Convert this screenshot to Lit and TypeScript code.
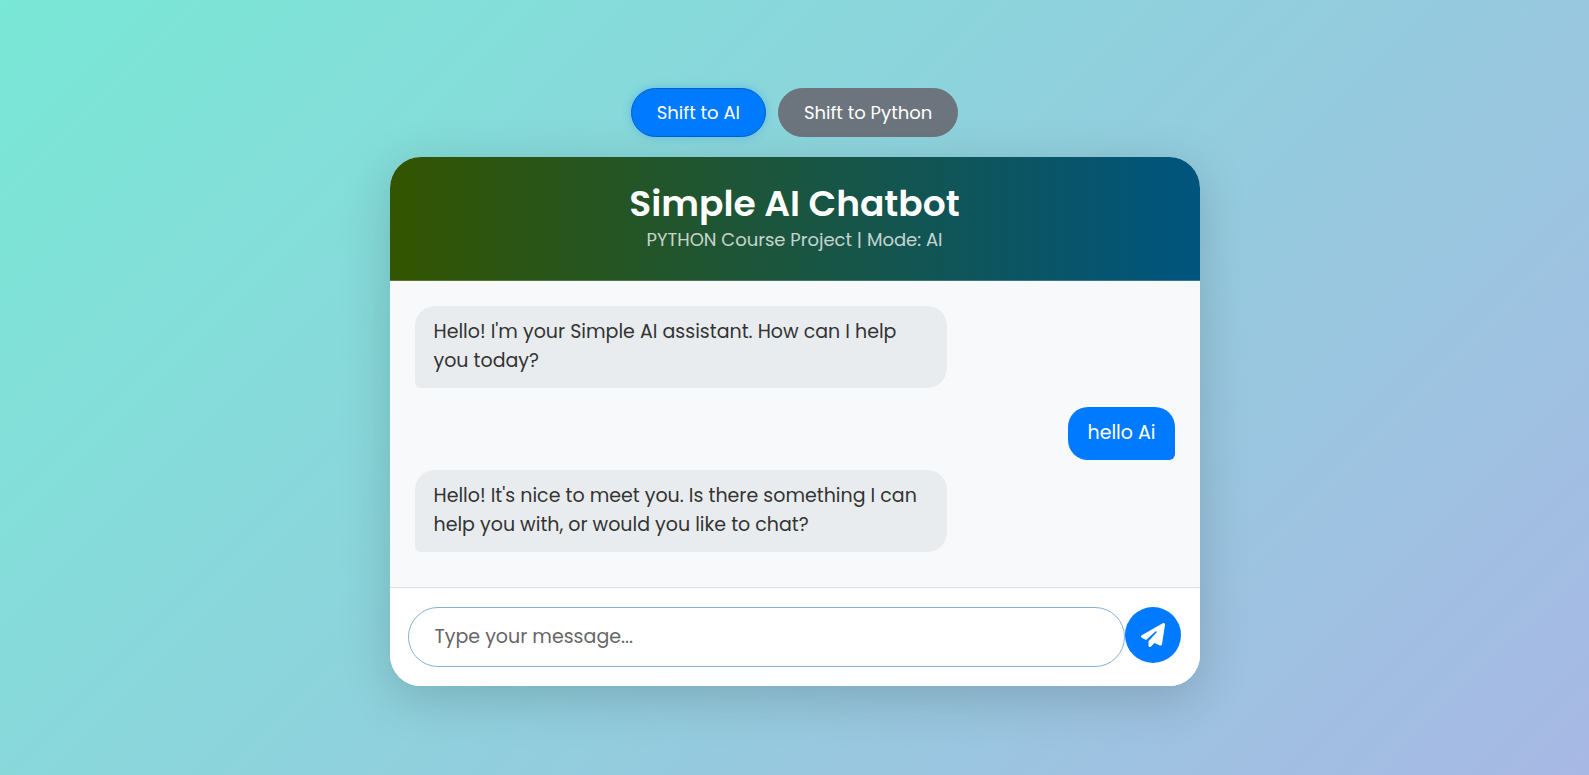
import { LitElement, html, css } from "lit";
import { customElement, state } from "lit/decorators.js";

type Mode = "AI" | "Python";

interface Message {
  from: "bot" | "user";
  text: string;
}

@customElement("app-root")
export class AppRoot extends LitElement {
  static styles = css`
    :host {
      display: flex;
      flex-direction: column;
      align-items: center;
      justify-content: center;
      gap: 20px;
      box-sizing: border-box;
      min-height: 100vh;
      padding: 18px 20px 20px;
      background: linear-gradient(135deg, #79e8d6, #a7b8e4);
      font-family: Poppins, Inter, "Liberation Sans", sans-serif;
      color: #333333;
    }
    * {
      box-sizing: border-box;
    }
    .modes {
      display: flex;
      gap: 12px;
    }
    .mode {
      padding: 12px 25px;
      border: 1px solid #6c757d;
      border-radius: 25px;
      background: #6c757d;
      color: #ffffff;
      font: inherit;
      font-size: 18px;
      line-height: 23px;
      cursor: pointer;
    }
    .mode.active {
      background: #007bff;
      border-color: #0062cc;
      box-shadow: 0 0 10px rgba(0, 123, 255, 0.3);
    }
    .card {
      width: 100%;
      max-width: 810px;
      overflow: hidden;
      border-radius: 31px;
      background: #ffffff;
      box-shadow: 0 12px 50px rgba(0, 0, 0, 0.17);
    }
    .header {
      padding: 25px 25px 26px;
      border-bottom: 1px solid rgba(255, 255, 255, 0.2);
      background: linear-gradient(90deg, #335500, #00557f) border-box;
      color: #ffffff;
      text-align: center;
    }
    .title {
      margin: 0;
      font-size: 36px;
      font-weight: 600;
      line-height: 44px;
    }
    .subtitle {
      margin: 0;
      font-size: 18px;
      line-height: 28px;
      opacity: 0.75;
    }
    .messages {
      display: flex;
      flex-direction: column;
      gap: 10px;
      padding: 25px 25px 35px;
      background: #f8f9fb;
    }
    .bubble {
      align-self: flex-start;
      max-width: 70%;
      padding: 11px 19px 13px;
      border-radius: 20px 20px 20px 6px;
      background: #e9ecef;
      font-size: 19px;
      line-height: 29px;
    }
    .bubble.user {
      align-self: flex-end;
      margin-top: 9px;
      border-radius: 20px 20px 6px 20px;
      background: #007bff;
      color: #ffffff;
    }
    .composer {
      display: flex;
      align-items: flex-start;
      padding: 19px 19px 19px 18px;
      border-top: 1px solid #dddddd;
      background: #ffffff;
    }
    .entry {
      flex: 1;
      min-width: 0;
      height: 60px;
      padding: 0 26px;
      border: 1px solid #8ab0d4;
      border-radius: 30px;
      outline: none;
      background: #ffffff;
      color: #333333;
      font: inherit;
      font-size: 19px;
    }
    .entry::placeholder {
      color: #666666;
      opacity: 1;
    }
    .send {
      display: grid;
      place-items: center;
      width: 56px;
      height: 56px;
      padding: 0;
      border: none;
      border-radius: 50%;
      background: #007bff;
      color: #ffffff;
      cursor: pointer;
    }
    .plane {
      width: 24px;
      height: 24px;
      fill: currentColor;
    }
  `;

  @state() private mode: Mode = "AI";

  @state() private messages: Message[] = [
    { from: "bot", text: "Hello! I'm your Simple AI assistant. How can I help you today?" },
    { from: "user", text: "hello Ai" },
    { from: "bot", text: "Hello! It's nice to meet you. Is there something I can help you with, or would you like to chat?" },
  ];

  private send(event: Event) {
    event.preventDefault();
    const entry = this.renderRoot.querySelector<HTMLInputElement>(".entry")!;
    const text = entry.value.trim();
    if (!text) return;
    this.messages = [...this.messages, { from: "user", text }];
    entry.value = "";
  }

  private modeButton(mode: Mode) {
    const active = this.mode === mode;
    return html`<button
      class="mode ${active ? "active" : ""}"
      type="button"
      aria-pressed=${active}
      @click=${() => (this.mode = mode)}
    >Shift to ${mode}</button>`;
  }

  render() {
    return html`
      <nav class="modes" aria-label="Mode">${this.modeButton("AI")}${this.modeButton("Python")}</nav>
      <main class="card">
        <header class="header">
          <h1 class="title">Simple AI Chatbot</h1>
          <p class="subtitle">PYTHON Course Project | Mode: ${this.mode}</p>
        </header>
        <section class="messages" aria-live="polite">
          ${this.messages.map((m) => html`<div class="bubble ${m.from}">${m.text}</div>`)}
        </section>
        <form class="composer" @submit=${this.send}>
          <input class="entry" type="text" aria-label="Message" placeholder="Type your message..." autocomplete="off" />
          <button class="send" type="submit" aria-label="Send">
            <svg class="plane" viewBox="0 0 512 512" aria-hidden="true">
              <path d="M498.1 5.6c10.1 7 15.4 19.1 13.5 31.2l-64 416c-1.5 9.7-7.4 18.2-16 23s-18.9 5.4-28 1.6L284 427.7l-68.5 74.1c-8.9 9.7-22.9 12.9-35.2 8.1S160 493.2 160 480V396.4c0-4 1.5-7.8 4.2-10.7L331.8 202.8c5.8-6.3 5.6-16-.4-22s-15.7-6.4-22-.7L106 360.8 17.7 316.6C7.1 311.3 .3 300.7 0 288.9s5.9-22.8 16.1-28.7l448-256c10.7-6.1 23.9-5.5 34 1.4z" />
            </svg>
          </button>
        </form>
      </main>
    `;
  }
}
